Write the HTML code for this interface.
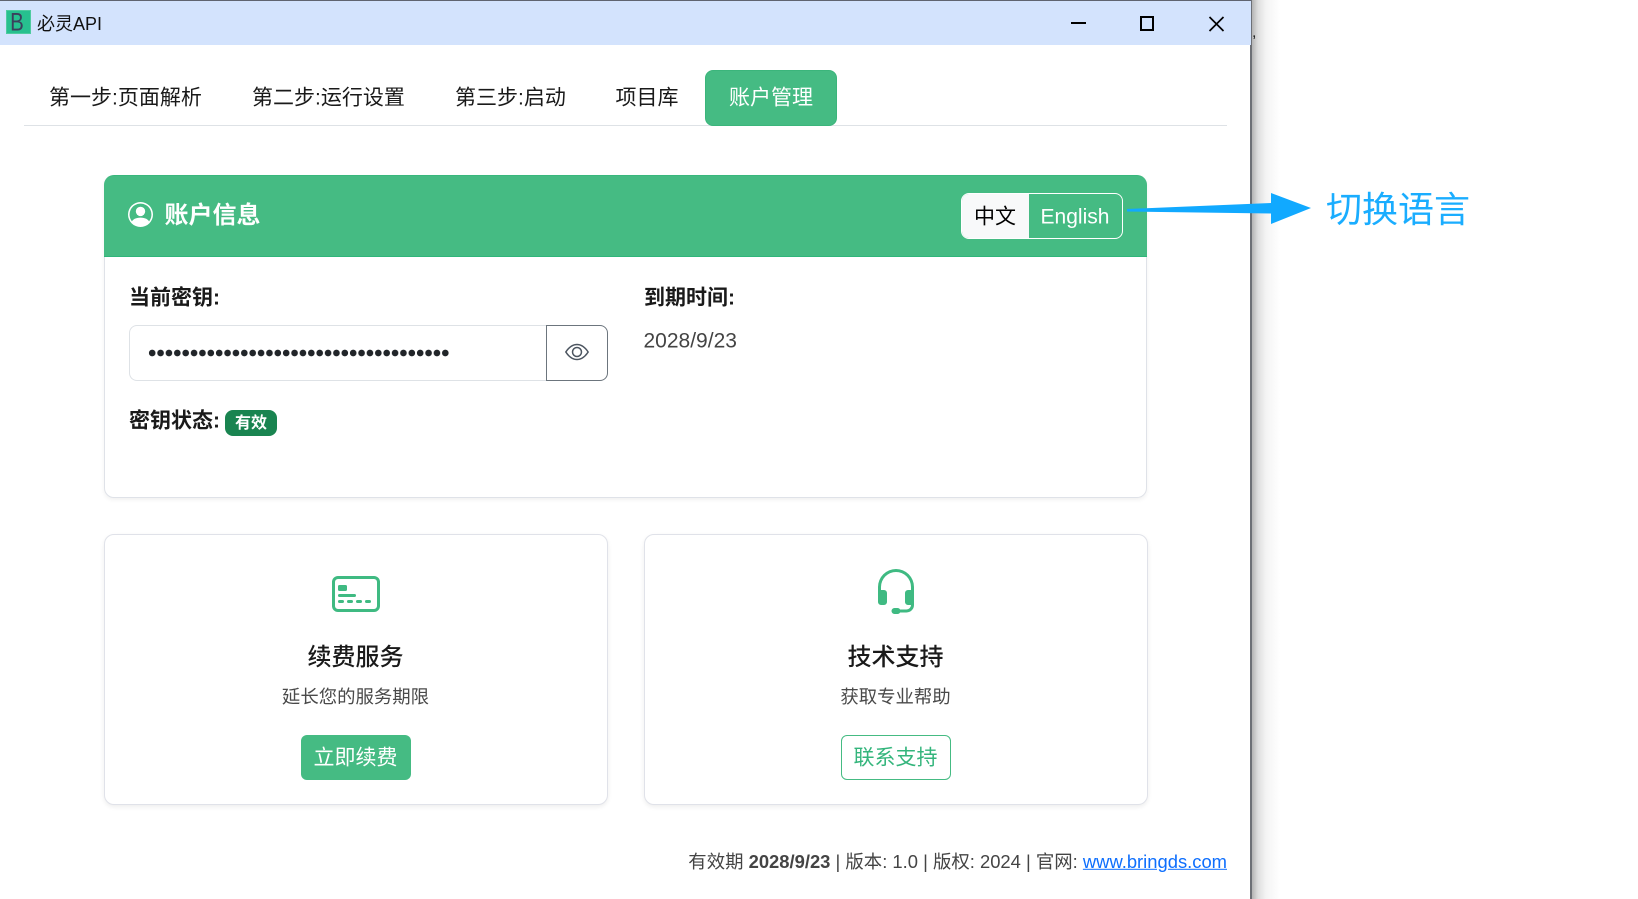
<!DOCTYPE html>
<html lang="zh-CN">
<head>
<meta charset="utf-8">
<title>必灵API</title>
<style>
html,body{margin:0;padding:0;background:#fff;}
body{width:1638px;height:899px;position:relative;overflow:hidden;font-family:"Liberation Sans","Noto Sans CJK SC",sans-serif;color:#212529;}
.a{position:absolute;box-sizing:border-box;white-space:nowrap;}
.t{position:absolute;white-space:nowrap;transform:translateY(-50%);line-height:1;}
.c{position:absolute;white-space:nowrap;transform:translate(-50%,-50%);line-height:1;}
.tab{font-size:21px;color:#1a1a1a;}
b,.b{font-weight:700;}
svg{position:absolute;display:block;}
</style>
</head>
<body>
<div class="a" style="left:1252px;top:0;width:30px;height:899px;background:linear-gradient(90deg,#b4b4b4 0,#dedede 6px,#f4f4f4 14px,#fff 28px);"></div>
<div class="a" style="left:0;top:0;width:1252px;height:899px;background:#fff;border-right:2px solid #6d7076;"></div>
<div class="a" style="left:0;top:0;width:1251px;height:45px;background:#d3e3fd;border-top:1px solid #5f6470;"></div>

<div class="a" style="left:5.5px;top:10px;width:25px;height:24px;background:#27c08f;border:1px solid #4ecb9f;"></div>
<div class="c" style="left:17px;top:23px;font-size:25px;color:#3b3f5c;transform:translate(-50%,-50%) scaleX(.82);">B</div>
<div class="t" style="left:37px;top:24px;font-size:18px;color:#111;">必灵API</div>

<div class="a" style="left:1071px;top:22px;width:15px;height:2px;background:#000;"></div>
<div class="a" style="left:1140px;top:16px;width:14px;height:15px;border:2px solid #000;"></div>
<svg style="left:1208px;top:16px;" width="17" height="16" viewBox="0 0 17 16"><path d="M1.5 1 15.5 15M15.5 1 1.5 15" stroke="#000" stroke-width="1.7" fill="none"/></svg>
<div class="t" style="left:1252px;top:33px;font-size:16px;color:#222;">,</div>

<div class="a" style="left:24px;top:125px;width:1203px;height:1px;background:#dee2e6;"></div>
<div class="t tab" style="left:49px;top:98px;">第一步:页面解析</div>
<div class="t tab" style="left:252px;top:98px;">第二步:运行设置</div>
<div class="t tab" style="left:455px;top:98px;">第三步:启动</div>
<div class="t tab" style="left:615.5px;top:98px;">项目库</div>
<div class="a" style="left:705px;top:70px;width:132px;height:56px;background:#45bb83;border-radius:8px;border:1px solid #3bb57b;"></div>
<div class="c tab" style="left:771px;top:98px;color:#fff;">账户管理</div>

<div class="a" style="left:104px;top:175px;width:1043px;height:323px;background:#fff;border:1px solid #dfe2e8;border-radius:10px;box-shadow:0 2px 4px rgba(0,0,0,.06);"></div>
<div class="a" style="left:104px;top:175px;width:1043px;height:82px;background:#45bb83;border-radius:10px 10px 0 0;border-bottom:1px solid #2fb57a;border-top:1px solid #38b77c;"></div>
<svg style="left:128px;top:202px;" width="25" height="25" viewBox="0 0 16 16" fill="#fff"><path d="M11 6a3 3 0 1 1-6 0 3 3 0 0 1 6 0z"/><path fill-rule="evenodd" d="M0 8a8 8 0 1 1 16 0A8 8 0 0 1 0 8zm8-7a7 7 0 0 0-5.468 11.37C3.242 11.226 4.805 10 8 10s4.757 1.225 5.468 2.37A7 7 0 0 0 8 1z"/></svg>
<div class="t" style="left:164.5px;top:216px;font-size:24px;color:#fff;font-weight:700;">账户信息</div>

<div class="a" style="left:961px;top:193px;width:162px;height:46px;border:1px solid #fff;border-radius:8px;overflow:hidden;">
  <div class="a" style="left:0;top:0;width:67px;height:46px;background:#f8f9fa;"></div>
</div>
<div class="c" style="left:995px;top:216.5px;font-size:21px;color:#000;">中文</div>
<div class="c" style="left:1075px;top:217px;font-size:21px;color:#fff;">English</div>

<svg style="left:1125px;top:190px;" width="190" height="38" viewBox="0 0 190 38"><path d="M2 19 146 13V3L186 18 146 34V23.5L2 21.5Z" fill="#11a9ff"/></svg>
<div class="t" style="left:1326px;top:210px;font-size:36px;color:#1aadff;font-weight:400;">切换语言</div>

<div class="t b" style="left:129px;top:298px;font-size:21px;color:#1a1a1a;">当前密钥:</div>
<div class="t b" style="left:644px;top:298px;font-size:21px;color:#1a1a1a;">到期时间:</div>
<div class="t" style="left:643.5px;top:341px;font-size:21px;color:#444;">2028/9/23</div>

<div class="a" style="left:129px;top:325px;width:418px;height:56px;border:1px solid #dee2e6;border-right:none;border-radius:8px 0 0 8px;"></div>
<div class="a" style="left:148px;top:349px;width:302px;height:8px;background:radial-gradient(circle at 4.19px 4px,#212529 3.1px,transparent 3.5px) 0 0/8.39px 8px repeat-x;"></div>
<div class="a" style="left:546px;top:325px;width:62px;height:56px;border:1px solid #6c757d;border-radius:0 8px 8px 0;"></div>
<svg style="left:564.5px;top:339.5px;" width="24" height="24" viewBox="0 0 16 16" fill="#4c5560"><path d="M16 8s-3-5.5-8-5.5S0 8 0 8s3 5.5 8 5.5S16 8 16 8zM1.173 8a13.133 13.133 0 0 1 1.66-2.043C4.12 4.668 5.88 3.5 8 3.5c2.12 0 3.879 1.168 5.168 2.457A13.133 13.133 0 0 1 14.828 8c-.058.087-.122.183-.195.288-.335.48-.83 1.12-1.465 1.755C11.879 11.332 10.119 12.5 8 12.5c-2.12 0-3.879-1.168-5.168-2.457A13.134 13.134 0 0 1 1.172 8z"/><path d="M8 5.5a2.5 2.5 0 1 0 0 5 2.5 2.5 0 0 0 0-5zM4.5 8a3.5 3.5 0 1 1 7 0 3.5 3.5 0 0 1-7 0z"/></svg>

<div class="t b" style="left:129px;top:421px;font-size:21px;color:#1a1a1a;">密钥状态:</div>
<div class="a" style="left:225px;top:410px;width:52px;height:26px;background:#198450;border-radius:8px;"></div>
<div class="c b" style="left:251px;top:423.5px;font-size:16px;color:#fff;">有效</div>

<div class="a" style="left:104px;top:534px;width:504px;height:271px;background:#fff;border:1px solid #e0e2e9;border-radius:10px;box-shadow:0 2px 5px rgba(0,0,0,.07);"></div>
<svg style="left:331.5px;top:569.5px;" width="48" height="48" viewBox="0 0 16 16" fill="#3fba82"><path d="M14 3a1 1 0 0 1 1 1v8a1 1 0 0 1-1 1H2a1 1 0 0 1-1-1V4a1 1 0 0 1 1-1h12zM2 2a2 2 0 0 0-2 2v8a2 2 0 0 0 2 2h12a2 2 0 0 0 2-2V4a2 2 0 0 0-2-2H2z"/><path d="M2 5.5a.5.5 0 0 1 .5-.5h2a.5.5 0 0 1 .5.5v1a.5.5 0 0 1-.5.5h-2a.5.5 0 0 1-.5-.5v-1zm0 3a.5.5 0 0 1 .5-.5h5a.5.5 0 0 1 0 1h-5a.5.5 0 0 1-.5-.5zm0 2a.5.5 0 0 1 .5-.5h1a.5.5 0 0 1 0 1h-1a.5.5 0 0 1-.5-.5zm3 0a.5.5 0 0 1 .5-.5h1a.5.5 0 0 1 0 1h-1a.5.5 0 0 1-.5-.5zm3 0a.5.5 0 0 1 .5-.5h1a.5.5 0 0 1 0 1h-1a.5.5 0 0 1-.5-.5zm3 0a.5.5 0 0 1 .5-.5h1a.5.5 0 0 1 0 1h-1a.5.5 0 0 1-.5-.5z"/></svg>
<div class="c" style="left:355.5px;top:658px;font-size:24px;font-weight:500;color:#1a1a1a;">续费服务</div>
<div class="c" style="left:355.5px;top:697px;font-size:18.4px;color:#4a4a4a;">延长您的服务期限</div>
<div class="a" style="left:301px;top:735px;width:110px;height:45px;background:#45bb83;border-radius:6px;"></div>
<div class="c" style="left:355.5px;top:758px;font-size:21px;color:#fff;">立即续费</div>

<div class="a" style="left:644px;top:534px;width:504px;height:271px;background:#fff;border:1px solid #e0e2e9;border-radius:10px;box-shadow:0 2px 5px rgba(0,0,0,.07);"></div>
<svg style="left:871.5px;top:569px;" width="48" height="48" viewBox="0 0 16 16" fill="#3fba82"><path d="M8 1a5 5 0 0 0-5 5v1h1a1 1 0 0 1 1 1v3a1 1 0 0 1-1 1H3a1 1 0 0 1-1-1V6a6 6 0 1 1 12 0v6a2.5 2.5 0 0 1-2.5 2.5H9.366a1 1 0 0 1-.866.5h-1a1 1 0 1 1 0-2h1a1 1 0 0 1 .866.5H11.5A1.5 1.5 0 0 0 13 12h-1a1 1 0 0 1-1-1V8a1 1 0 0 1 1-1h1V6a5 5 0 0 0-5-5z"/></svg>
<div class="c" style="left:895.5px;top:658px;font-size:24px;font-weight:500;color:#1a1a1a;">技术支持</div>
<div class="c" style="left:895.5px;top:697px;font-size:18.4px;color:#4a4a4a;">获取专业帮助</div>
<div class="a" style="left:841px;top:735px;width:110px;height:45px;background:#fff;border:1px solid #45bb83;border-radius:6px;"></div>
<div class="c" style="left:895.5px;top:758px;font-size:21px;color:#34b57c;">联系支持</div>

<div class="t" style="right:411px;top:862px;font-size:18.4px;color:#444;">有效期 <b>2028/9/23</b> | 版本: 1.0 | 版权: 2024 | 官网: <a style="color:#0d6efd;text-decoration:underline;">www.bringds.com</a></div>
</body>
</html>
